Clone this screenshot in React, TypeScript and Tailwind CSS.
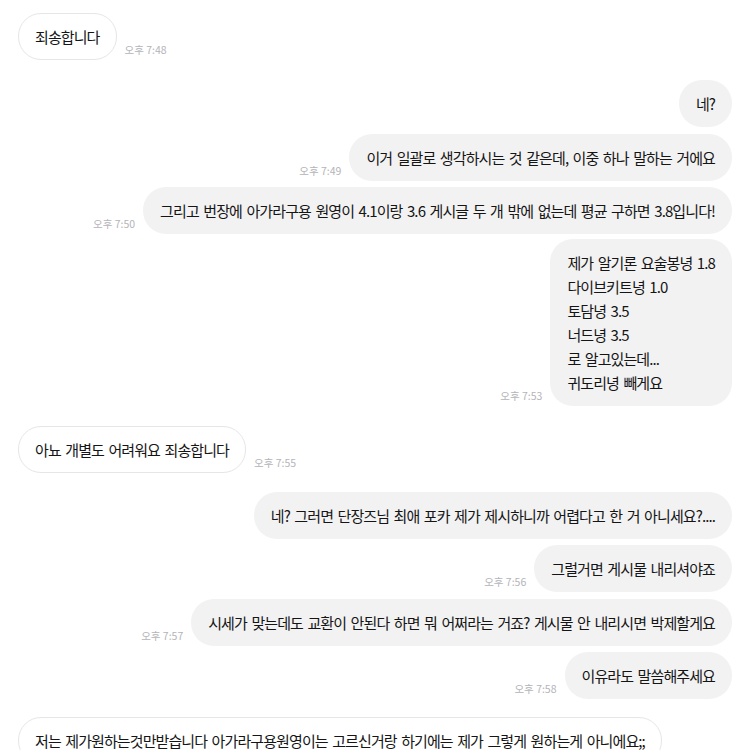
import React from "react";

type Msg = { side: "me" | "them"; lines: string[]; time?: string; gapTop: number };

const msgs: Msg[] = [
  { side: "them", lines: ["죄송합니다"], time: "오후 7:48", gapTop: 13 },
  { side: "me", lines: ["네?"], gapTop: 20 },
  { side: "me", lines: ["이거 일괄로 생각하시는 것 같은데, 이중 하나 말하는 거에요"], time: "오후 7:49", gapTop: 7 },
  { side: "me", lines: ["그리고 번장에 아가라구용 원영이 4.1이랑 3.6 게시글 두 개 밖에 없는데 평균 구하면 3.8입니다!"], time: "오후 7:50", gapTop: 6 },
  {
    side: "me",
    lines: ["제가 알기론 요술봉녕 1.8", "다이브키트녕 1.0", "토담녕 3.5", "너드녕 3.5", "로 알고있는데...", "귀도리녕 빼게요"],
    time: "오후 7:53",
    gapTop: 5,
  },
  { side: "them", lines: ["아뇨 개별도 어려워요 죄송합니다"], time: "오후 7:55", gapTop: 20 },
  { side: "me", lines: ["네? 그러면 단장즈님 최애 포카 제가 제시하니까 어렵다고 한 거 아니세요?...."], gapTop: 19 },
  { side: "me", lines: ["그럴거면 게시물 내리셔야죠"], time: "오후 7:56", gapTop: 6 },
  { side: "me", lines: ["시세가 맞는데도 교환이 안된다 하면 뭐 어쩌라는 거죠? 게시물 안 내리시면 박제할게요"], time: "오후 7:57", gapTop: 7 },
  { side: "me", lines: ["이유라도 말씀해주세요"], time: "오후 7:58", gapTop: 6 },
  { side: "them", lines: ["저는 제가원하는것만받습니다 아가라구용원영이는 고르신거랑 하기에는 제가 그렇게 원하는게 아니에요;;"], gapTop: 18 },
];

function Bubble({ m }: { m: Msg }) {
  const me = m.side === "me";
  return (
    <div
      className={
        me
          ? "rounded-[23px] bg-[#f2f2f3] px-[17px] py-[11.5px] text-[15px] leading-[24px] tracking-[-0.9px] [word-spacing:2px] text-[#151515] whitespace-nowrap"
          : "rounded-[23px] border border-[#e6e6e8] bg-white px-[16px] py-[10.5px] text-[15px] leading-[24px] tracking-[-0.9px] [word-spacing:2px] text-[#151515] whitespace-nowrap"
      }
    >
      {m.lines.map((l, i) => (
        <div key={i}>{l}</div>
      ))}
    </div>
  );
}

function Time({ t }: { t?: string }) {
  if (!t) return null;
  return <div className="mb-[4px] text-[10.5px] leading-[13px] text-[#b4b4b8] whitespace-nowrap">{t}</div>;
}

export default function App() {
  return (
    <div
      className="h-[750px] w-[750px] overflow-hidden bg-white"
      style={{ fontFamily: '"Noto Sans CJK KR", "Noto Sans", sans-serif' }}
    >
      <div className="flex flex-col pl-[18px] pr-[18px]">
        {msgs.map((m, i) => (
          <div
            key={i}
            className={m.side === "me" ? "flex items-end justify-end gap-[8px]" : "flex items-end justify-start gap-[8px]"}
            style={{ marginTop: m.gapTop }}
          >
            {m.side === "me" ? (
              <>
                <Time t={m.time} />
                <Bubble m={m} />
              </>
            ) : (
              <>
                <Bubble m={m} />
                <Time t={m.time} />
              </>
            )}
          </div>
        ))}
      </div>
    </div>
  );
}
